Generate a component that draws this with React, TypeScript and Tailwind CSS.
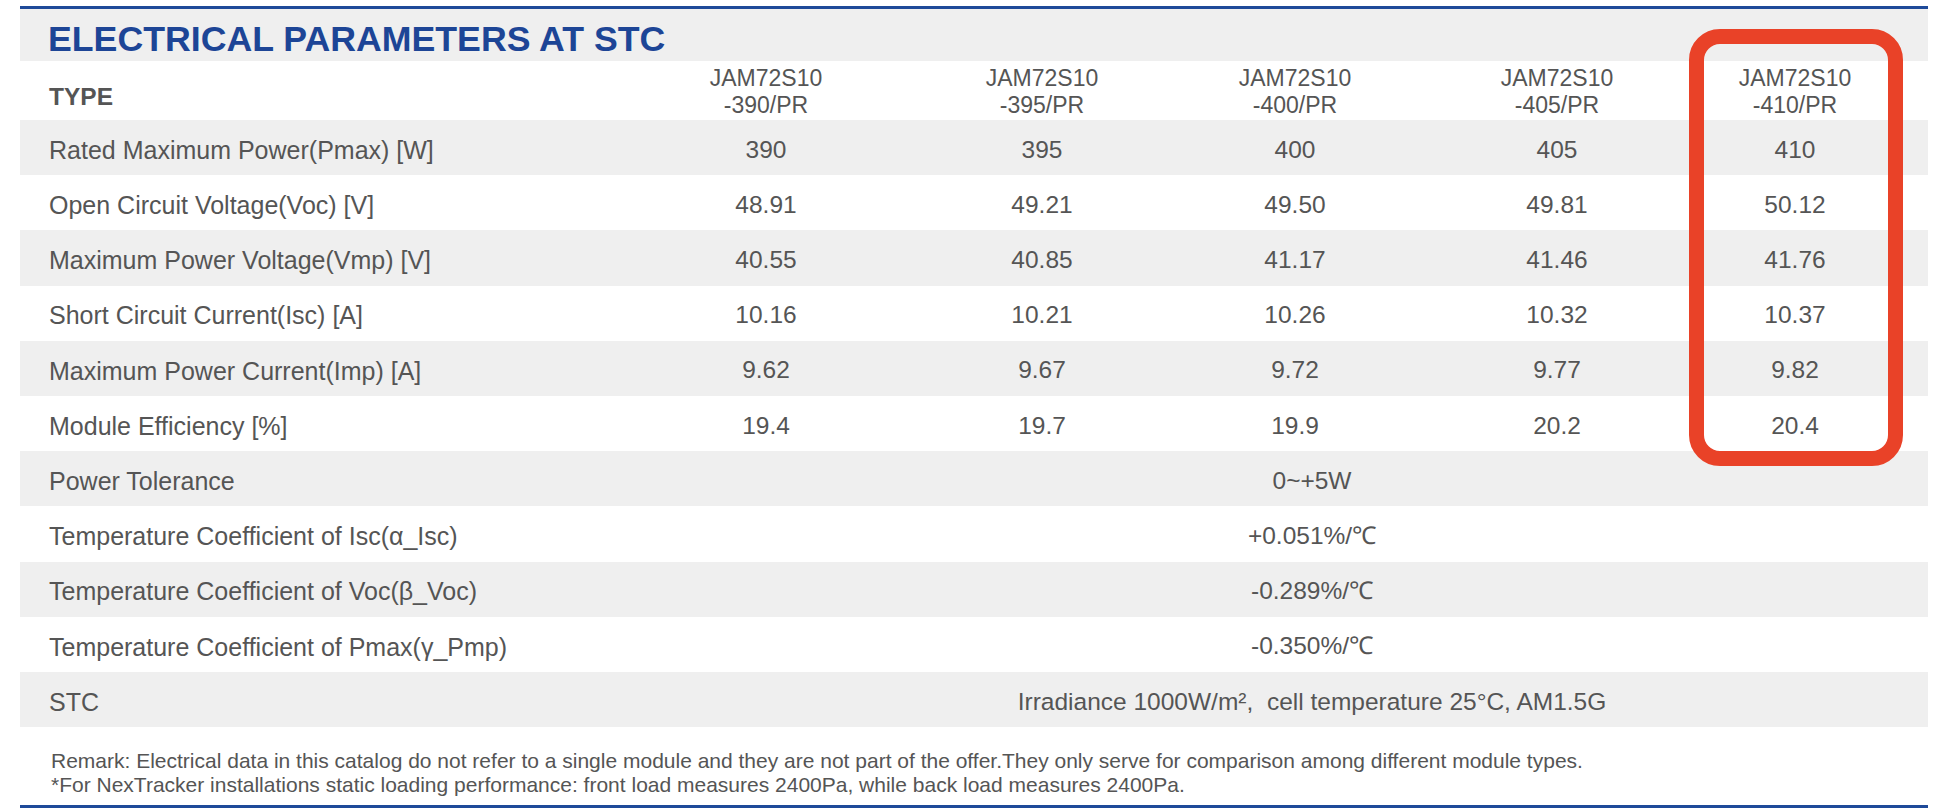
const MODELS = ["390", "395", "400", "405", "410"];

type Row = { label: string; values?: string[]; span?: string };

const ROWS: Row[] = [
  { label: "Rated Maximum Power(Pmax) [W]", values: ["390", "395", "400", "405", "410"] },
  { label: "Open Circuit Voltage(Voc) [V]", values: ["48.91", "49.21", "49.50", "49.81", "50.12"] },
  { label: "Maximum Power Voltage(Vmp) [V]", values: ["40.55", "40.85", "41.17", "41.46", "41.76"] },
  { label: "Short Circuit Current(Isc) [A]", values: ["10.16", "10.21", "10.26", "10.32", "10.37"] },
  { label: "Maximum Power Current(Imp) [A]", values: ["9.62", "9.67", "9.72", "9.77", "9.82"] },
  { label: "Module Efficiency [%]", values: ["19.4", "19.7", "19.9", "20.2", "20.4"] },
  { label: "Power Tolerance", span: "0~+5W" },
  { label: "Temperature Coefficient of Isc(α_Isc)", span: "+0.051%/℃" },
  { label: "Temperature Coefficient of Voc(β_Voc)", span: "-0.289%/℃" },
  { label: "Temperature Coefficient of Pmax(γ_Pmp)", span: "-0.350%/℃" },
  { label: "STC", span: "Irradiance 1000W/m²,\u00a0 cell temperature 25°C, AM1.5G" },
];

// label | five model columns | right gutter
const GRID = "grid grid-cols-[608px_276px_276px_230px_294px_182px_42px]";

export default function App() {
  return (
    <div className="relative w-[1948px] h-[808px] bg-white font-['Liberation_Sans',Arial,sans-serif] text-[#555]">
      <div className="ml-[20px] w-[1908px] pt-[6px]">
        <div className="h-[3px] bg-[#1e4a99]" />

        <div className="h-[52px] bg-[#efefef] pl-[28px] pt-[13px]">
          <h1 className="text-[35.7px] leading-[35px] font-bold text-[#1d4596]">
            ELECTRICAL PARAMETERS AT STC
          </h1>
        </div>

        <div className={`${GRID} h-[59px] text-[23px] leading-[27px]`}>
          <div className="pl-[29px] pt-[22px] text-[24.5px] font-bold">TYPE</div>
          {MODELS.map((m) => (
            <div key={m} className="pt-[4px] text-center">
              <div>JAM72S10</div>
              <div>-{m}/PR</div>
            </div>
          ))}
          <div />
        </div>

        {ROWS.map((row, i) => (
          <div
            key={row.label}
            className={`${GRID} h-[55.2px] text-[24.5px] ${i % 2 === 0 ? "bg-[#efefef]" : "bg-white"}`}
          >
            <div className="flex items-center pl-[29px] pt-[6px] text-[25px]">{row.label}</div>
            {row.values ? (
              row.values.map((v, j) => (
                <div key={j} className="flex items-center justify-center pt-[5px]">
                  {v}
                </div>
              ))
            ) : (
              <div className="col-span-5 flex items-center justify-center pl-[110px] pt-[5px]">
                {row.span}
              </div>
            )}
            <div />
          </div>
        ))}

        <div className="pt-[22px] pl-[31px] text-[21px] leading-[24px]">
          <p>
            Remark: Electrical data in this catalog do not refer to a single module and they are not part of the offer.They only serve for comparison among different module types.
          </p>
          <p>
            *For NexTracker installations static loading performance: front load measures 2400Pa, while back load measures 2400Pa.
          </p>
        </div>

        <div className="mt-[8px] h-[3px] bg-[#1e4a99]" />
      </div>

      {/* highlight around the 410 column */}
      <div className="absolute left-[1689px] top-[29px] w-[214px] h-[437px] rounded-[31px] border-[15px] border-[#e94228]" />
    </div>
  );
}
